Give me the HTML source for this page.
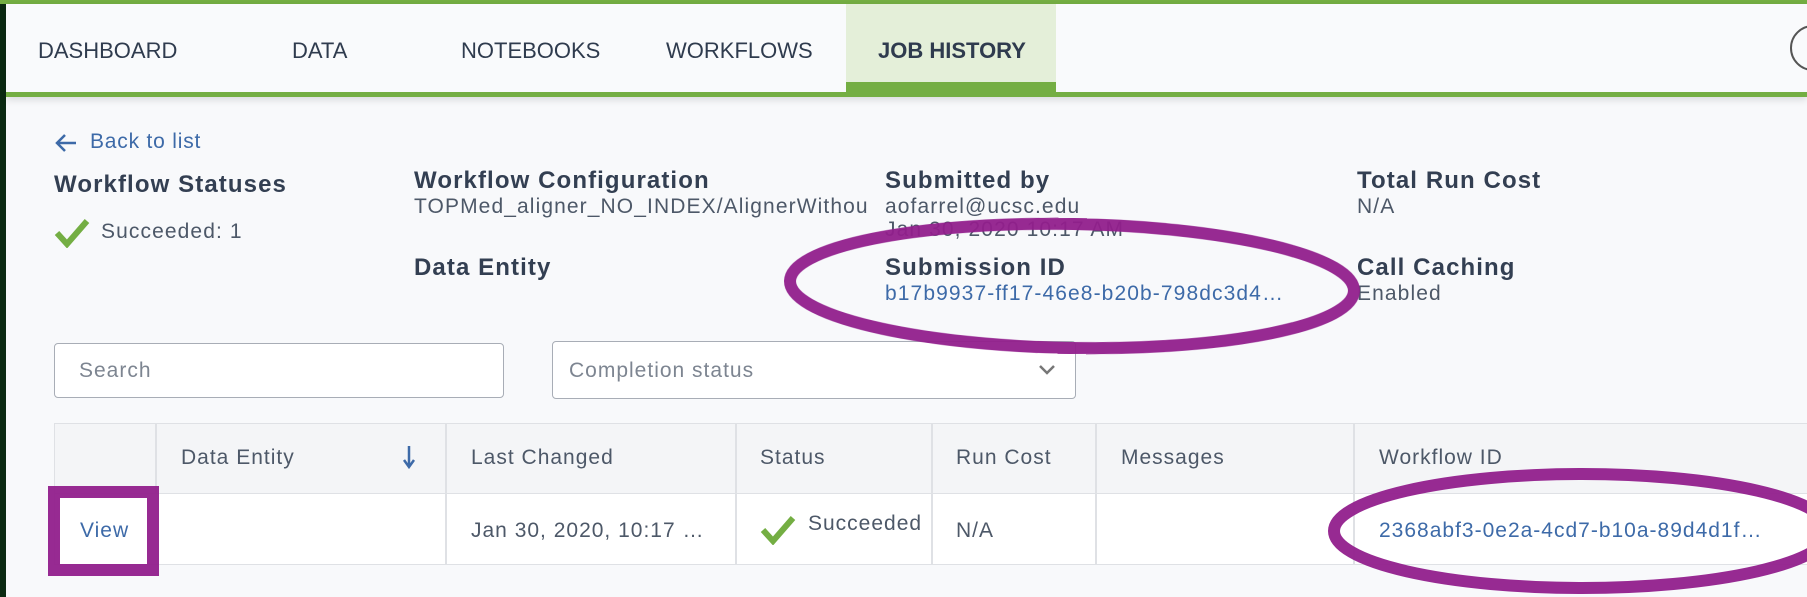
<!DOCTYPE html>
<html><head><meta charset="utf-8"><style>
*{box-sizing:border-box;margin:0;padding:0}
body{width:1807px;height:597px;overflow:hidden;background:#f8f9fb;font-family:"Liberation Sans",sans-serif;color:#333f52;position:relative}
.abs{position:absolute;white-space:nowrap}
.nav{position:absolute;left:6px;top:4px;width:1801px;height:93px;background:#f9fafc;border-bottom:5px solid #74ae43;box-shadow:0 3px 7px rgba(0,0,0,.12)}
.nav .t{position:absolute;top:34px;font-size:22px;color:#2f3b4e}
.act{position:absolute;left:840px;top:0;width:210px;height:88px;background:#e4efd9;border-bottom:10px solid #74ae43}
.h3{position:absolute;white-space:nowrap;font-size:24px;font-weight:bold;color:#333f52;letter-spacing:1.1px}
.v{position:absolute;white-space:nowrap;font-size:21px;color:#4d5868;letter-spacing:1.1px}
.lnk{color:#3d6aa8}
.inp{position:absolute;background:#fff;border:1.5px solid #a8adb6;border-radius:4px;font-size:21px;color:#7d8591;letter-spacing:1px}
.c{position:absolute;font-size:21px;color:#4d5868;letter-spacing:1px;white-space:nowrap}
.vl{position:absolute;width:1.5px;background:#dfe1e5}
</style></head><body>
<div class="abs" style="left:0;top:0;width:6px;height:597px;background:#0b2a12"></div>
<div class="abs" style="left:0;top:0;width:1807px;height:4px;background:#74ae43"></div>
<div class="nav">
<div class="act"></div>
<span class="t" style="left:32px">DASHBOARD</span>
<span class="t" style="left:286px">DATA</span>
<span class="t" style="left:455px">NOTEBOOKS</span>
<span class="t" style="left:660px">WORKFLOWS</span>
<span class="t" style="left:872px;font-weight:bold">JOB HISTORY</span>
<div class="abs" style="left:1784px;top:21px;width:46px;height:46px;border:2px solid #555;border-radius:50%"></div>
</div>
<svg class="abs" style="left:54px;top:132px" width="24" height="22"><path d="M22 11 H3 M11 3 L3 11 L11 19" stroke="#3d6aa8" stroke-width="2.5" fill="none"/></svg>
<div class="abs lnk" style="left:90px;top:130px;font-size:21px;letter-spacing:.8px">Back to list</div>
<div class="h3" style="left:54px;top:171px">Workflow Statuses</div>
<svg class="abs" style="left:54px;top:218px" width="36" height="30"><path d="M3 15 L13 26 L33 3" stroke="#74ae43" stroke-width="6" fill="none"/></svg>
<div class="v" style="left:101px;top:220px">Succeeded: 1</div>
<div class="h3" style="left:414px;top:167px">Workflow Configuration</div>
<div class="v" style="left:414px;top:195px">TOPMed_aligner_NO_INDEX/AlignerWithou</div>
<div class="h3" style="left:414px;top:254px">Data Entity</div>
<div class="h3" style="left:885px;top:167px">Submitted by</div>
<div class="v" style="left:885px;top:195px">aofarrel@ucsc.edu</div>
<div class="v" style="left:885px;top:218px">Jan 30, 2020 10:17 AM</div>
<div class="h3" style="left:885px;top:254px">Submission ID</div>
<div class="v lnk" style="left:885px;top:282px">b17b9937-ff17-46e8-b20b-798dc3d4…</div>
<div class="h3" style="left:1357px;top:167px">Total Run Cost</div>
<div class="v" style="left:1357px;top:195px">N/A</div>
<div class="h3" style="left:1357px;top:254px">Call Caching</div>
<div class="v" style="left:1357px;top:282px">Enabled</div>
<div class="inp" style="left:54px;top:343px;width:450px;height:55px;padding:15px 0 0 24px">Search</div>
<div class="inp" style="left:552px;top:341px;width:524px;height:58px;padding:17px 0 0 16px">Completion status</div>
<svg class="abs" style="left:1038px;top:364px" width="18" height="12"><path d="M2 2 L9 9 L16 2" stroke="#777" stroke-width="2.5" fill="none"/></svg>
<!-- table -->
<div class="abs" style="left:54px;top:423px;width:1760px;height:142px;background:#fff;border:1.5px solid #dfe1e5"></div>
<div class="abs" style="left:55px;top:424px;width:1760px;height:70px;background:#f4f5f7;border-bottom:1.5px solid #dfe1e5"></div>
<div class="vl" style="left:155px;top:424px;height:70px"></div>
<div class="vl" style="left:445px;top:424px;height:141px"></div>
<div class="vl" style="left:735px;top:424px;height:141px"></div>
<div class="vl" style="left:931px;top:424px;height:141px"></div>
<div class="vl" style="left:1095px;top:424px;height:141px"></div>
<div class="vl" style="left:1353px;top:424px;height:141px"></div>
<div class="c" style="left:181px;top:446px">Data Entity</div>
<svg class="abs" style="left:402px;top:444px" width="14" height="26"><path d="M7 2 V22 M2 16 L7 23 L12 16" stroke="#3d6aa8" stroke-width="2.5" fill="none"/></svg>
<div class="c" style="left:471px;top:446px">Last Changed</div>
<div class="c" style="left:760px;top:446px">Status</div>
<div class="c" style="left:956px;top:446px">Run Cost</div>
<div class="c" style="left:1121px;top:446px">Messages</div>
<div class="c" style="left:1379px;top:446px">Workflow ID</div>
<div class="c lnk" style="left:80px;top:519px;color:#3d6aa8">View</div>
<div class="c" style="left:471px;top:519px">Jan 30, 2020, 10:17 …</div>
<svg class="abs" style="left:760px;top:515px" width="36" height="30"><path d="M3 15 L13 26 L33 3" stroke="#74ae43" stroke-width="6" fill="none"/></svg>
<div class="c" style="left:808px;top:512px">Succeeded</div>
<div class="c" style="left:956px;top:519px">N/A</div>
<div class="c lnk" style="left:1379px;top:519px;color:#3d6aa8">2368abf3-0e2a-4cd7-b10a-89d4d1f…</div>
<svg class="abs" style="left:0;top:0" width="1807" height="597">
<g fill="none" stroke="#921f8d" stroke-width="12" opacity=".95">
<ellipse cx="1072" cy="286" rx="282" ry="62" transform="rotate(1 1072 286)"/>
<ellipse cx="1582" cy="531" rx="248" ry="57"/>
<rect x="54" y="492" width="99" height="78"/>
</g></svg>
</body></html>
